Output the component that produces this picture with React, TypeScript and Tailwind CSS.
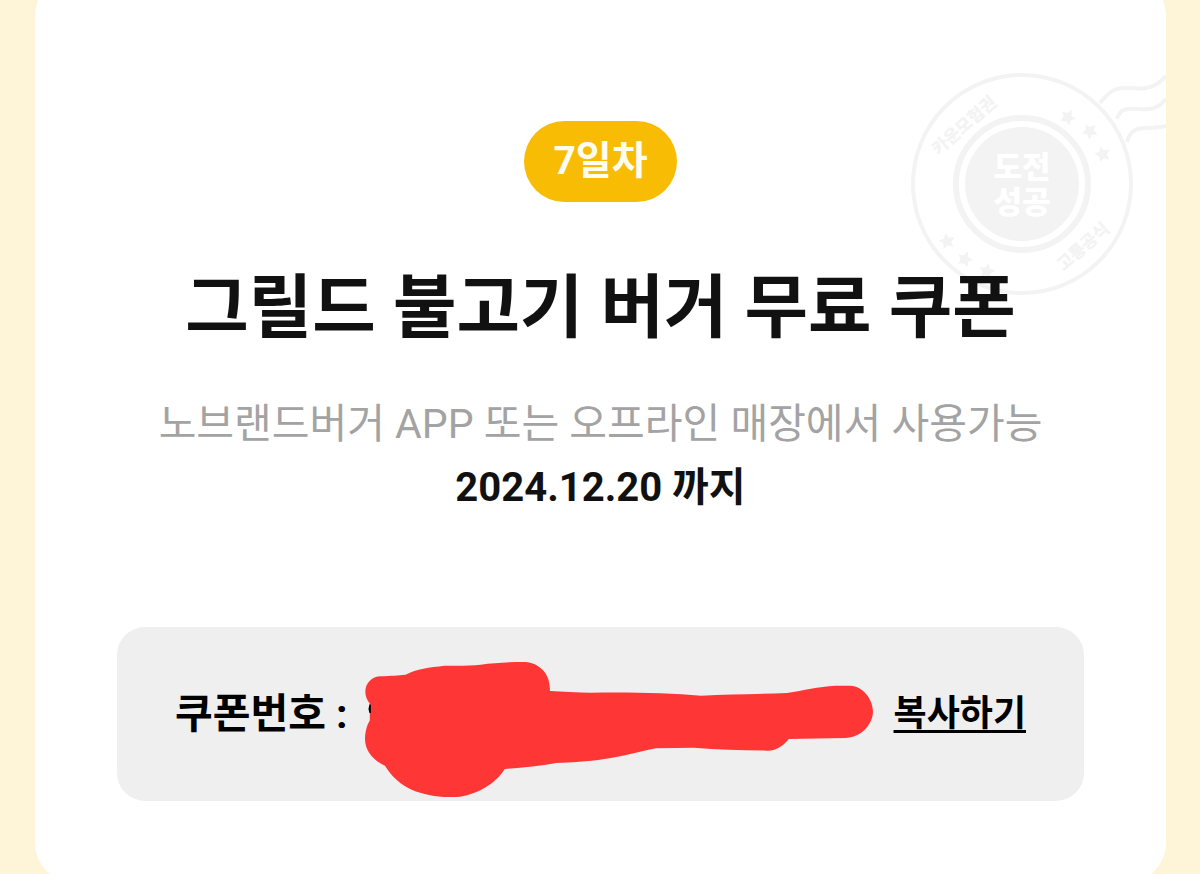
const STAR = 'M0 -8 L2.6 -2.8 L8 -2.2 L4 1.6 L5 7 L0 4.4 L-5 7 L-4 1.6 L-8 -2.2 L-2.6 -2.8 Z';

const stars = [
  { x: 168, y: 50, r: 28 },
  { x: 190, y: 64, r: 40 },
  { x: 203, y: 87, r: 56 },
  { x: 47, y: 174, r: -12 },
  { x: 65, y: 192, r: 20 },
  { x: 87, y: 204, r: 12 },
];

function Stamp() {
  return (
    <svg viewBox="0 0 266 236" className="absolute right-0 top-[91px] w-[266px] h-[236px]" aria-hidden="true">
      <g fill="none" stroke="#f3f3f3">
        <circle cx="122" cy="117" r="109" strokeWidth="4" />
        <circle cx="122" cy="117" r="66" strokeWidth="6" />
        <path strokeWidth="4" d="M200 36 C208 26 214 20 228 21 S254 23 266 9" />
        <path strokeWidth="4" d="M217 52 C220 42 226 41 238 42 S258 42 266 32" />
        <path strokeWidth="4" d="M227 75 C230 64 236 61 246 61 S258 61 266 59" />
      </g>
      <circle cx="122" cy="117" r="57" fill="#f3f3f3" />
      <g fill="#f3f3f3">
        {stars.map(s => (
          <path key={s.x} d={STAR} transform={`translate(${s.x} ${s.y}) rotate(${s.r})`} />
        ))}
      </g>
      <g fontWeight="900" textAnchor="middle">
        <text x="122" y="111" fontSize="31" fill="#fff">도전</text>
        <text x="122" y="146" fontSize="31" fill="#fff">성공</text>
        <text fontSize="17" fill="#f3f3f3" transform="translate(68 63) rotate(-41)">카운모험권</text>
        <text fontSize="17" fill="#f3f3f3" transform="translate(187 184) rotate(-41)">고통공식</text>
      </g>
    </svg>
  );
}

function Scribble() {
  return (
    <svg viewBox="44 65 1476 405" preserveAspectRatio="none" className="absolute left-[17px] top-[-20px] w-[508px] h-[135px]" aria-hidden="true">
      <path
        fill="#ff3636"
        d="M58 190 C30 155 50 108 90 108 C120 106 140 106 162 103 C195 84 230 82 275 76 C310 76 350 77 380 73 C420 68 460 65 510 65 C550 68 584 100 581 152 C620 153 660 157 700 157 C800 155 930 157 1020 166 C1100 162 1180 162 1270 158 C1320 150 1360 139 1410 136 L1455 136 C1490 138 1520 175 1520 215 C1518 258 1480 292 1440 293 L1275 296 C1262 314 1240 332 1212 331 C1140 330 1070 328 1000 322 L890 324 C840 333 790 350 740 356 C690 364 640 366 600 368 C550 377 500 382 450 386 C425 430 365 466 310 470 C220 472 145 450 102 376 C60 356 44 325 44 295 C45 270 50 255 58 240 Z"
      />
      <path fill="#000" d="M57 192 L61 193 L61 219 L57 218 L54 206 Z" />
    </svg>
  );
}

export default function App() {
  return (
    <div className="h-screen overflow-hidden bg-[#fef4d8] pl-[35px] pr-[34px] font-['Roboto','Noto_Sans_CJK_KR',sans-serif] text-[#111]">
      <main className="relative -mt-6 rounded-[40px] bg-white px-[82px] pt-[145px] pb-[82px] flex flex-col items-center text-center">
        <Stamp />
        <span className="rounded-full bg-[#f9bc05] px-[29px] py-[14px] text-[39px] leading-[53px] font-bold text-[#fffdf0]">7일차</span>
        <h1 className="relative mt-[62px] text-[69px] leading-[90px] font-bold">그릴드 불고기 버거 무료 쿠폰</h1>
        <p className="mt-[38px] text-[41px] leading-[64px] text-[#a3a3a3]">노브랜드버거 APP 또는 오프라인 매장에서 사용가능</p>
        <p className="text-[40px] leading-[64px] font-bold">2024.12.20 까지</p>

        <div className="mt-[107px] w-full rounded-[28px] bg-[#efefef] px-[58px] py-[55px] flex items-center text-black">
          <span className="text-[41px] leading-[64px] font-bold">쿠폰번호 :</span>
          <div className="relative flex-1 h-[64px]">
            <Scribble />
          </div>
          <button type="button" className="text-[36px] leading-[64px] font-bold underline decoration-[3px] underline-offset-4 [text-decoration-skip-ink:none]">복사하기</button>
        </div>
      </main>
    </div>
  );
}
